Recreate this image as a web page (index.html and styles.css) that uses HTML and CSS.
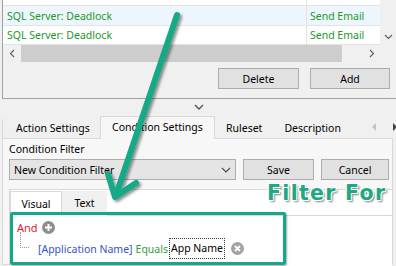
FILE: index.html
```html
<!DOCTYPE html>
<html lang="en">
<head>
    <meta charset="UTF-8">
    <meta name="viewport" content="width=device-width, initial-scale=1.0">
    <title>Action Settings</title>
    <link rel="stylesheet" href="styles.css">
</head>
<body>
    <div class="list-panel">
        <div class="grid">
            <div class="grid-main">
                <div class="row row-cut">
                    <div class="cell cell-name"></div>
                    <div class="cell cell-action"></div>
                </div>
                <div class="row row-hot">
                    <div class="cell cell-name">SQL Server: Deadlock</div>
                    <div class="cell cell-action">Send Email</div>
                </div>
                <div class="row">
                    <div class="cell cell-name">SQL Server: Deadlock</div>
                    <div class="cell cell-action">Send Email</div>
                </div>
                <div class="hscroll">
                    <div class="sb-btn">
                        <svg width="7" height="9" viewBox="0 0 7 9"><polyline points="5,1 1.5,4.5 5,8" fill="none" stroke="#606060" stroke-width="1.2"/></svg>
                    </div>
                    <div class="sb-thumb"></div>
                    <div class="sb-track"></div>
                    <div class="sb-btn">
                        <svg width="7" height="9" viewBox="0 0 7 9"><polyline points="2,1 5.5,4.5 2,8" fill="none" stroke="#606060" stroke-width="1.2"/></svg>
                    </div>
                </div>
            </div>
            <div class="vscroll">
                <div class="vs-track"></div>
                <div class="vs-btn">
                    <svg width="9" height="7" viewBox="0 0 9 7"><polyline points="1,2 4.5,5.5 8,2" fill="none" stroke="#606060" stroke-width="1.2"/></svg>
                </div>
                <div class="vs-corner"></div>
            </div>
        </div>
        <div class="list-buttons">
            <button class="btn btn-delete">Delete</button>
            <button class="btn btn-add">Add</button>
        </div>
    </div>

    <div class="splitter">
        <svg width="10" height="6" viewBox="0 0 10 6"><polyline points="1,1 5,5 9,1" fill="none" stroke="#505050" stroke-width="1.3"/></svg>
    </div>

    <div class="tabs">
        <div class="tab-strip">
            <div class="tab tab-first">Action Settings</div>
            <div class="tab tab-active">Condition Settings</div>
            <div class="tab">Ruleset</div>
            <div class="tab">Description</div>
            <div class="tab-arrows">
                <svg width="5" height="8" viewBox="0 0 5 8"><polygon points="4,0 0,4 4,8" fill="#c4c4c4"/></svg>
                <svg width="5" height="8" viewBox="0 0 5 8"><polygon points="1,0 5,4 1,8" fill="#404040"/></svg>
            </div>
        </div>
        <div class="tab-page">
            <div class="field-label">Condition Filter</div>
            <div class="filter-row">
                <div class="combo">
                    <span>New Condition Filter</span>
                    <svg width="10" height="6" viewBox="0 0 10 6"><polyline points="1,1 5,5 9,1" fill="none" stroke="#505050" stroke-width="1.2"/></svg>
                </div>
                <button class="btn btn-save">Save</button>
                <button class="btn btn-cancel">Cancel</button>
            </div>
            <div class="editor">
                <div class="editor-tabs">
                    <div class="etab etab-active">Visual</div>
                    <div class="etab">Text</div>
                </div>
                <div class="editor-body">
                    <div class="node">
                        <span class="op-group">And</span>
                        <svg class="icon" width="13" height="13" viewBox="0 0 13 13"><circle cx="6.5" cy="6.5" r="6.5" fill="#8e8e8e"/><path d="M6.5 3v7M3 6.5h7" stroke="#fff" stroke-width="2"/></svg>
                    </div>
                    <div class="node node-child">
                        <span class="tree-line"></span>
                        <span class="field">[Application Name]</span>
                        <span class="op">Equals</span>
                        <span class="value">App Name</span>
                        <svg class="icon" width="13" height="13" viewBox="0 0 13 13"><circle cx="6.5" cy="6.5" r="6.5" fill="#a3a3a3"/><path d="M4 4l5 5M9 4l-5 5" stroke="#fff" stroke-width="1.8"/></svg>
                    </div>
                </div>
            </div>
        </div>
    </div>

    <div class="callout-box"></div>
    <div class="callout-text">Filter For</div>
    <svg class="callout-arrow" width="396" height="266" viewBox="0 0 396 266">
        <defs>
            <filter id="shade" x="-20%" y="-20%" width="140%" height="140%">
                <feDropShadow dx="2" dy="2" stdDeviation="1.5" flood-color="#000" flood-opacity="0.45"/>
            </filter>
        </defs>
        <g filter="url(#shade)" stroke="#14a987" stroke-width="6" fill="none" stroke-linecap="round" stroke-linejoin="round">
            <line x1="177" y1="15" x2="116" y2="195"/>
            <polyline points="108,174 115,197 136,183"/>
        </g>
    </svg>
</body>
</html>
```

FILE: styles.css
```css
* {
    margin: 0;
    padding: 0;
    box-sizing: border-box;
}

body {
    position: relative;
    width: 396px;
    height: 266px;
    overflow: hidden;
    background: #f0f0f0;
    font-family: 'Noto Sans', sans-serif;
    font-size: 10.5px;
    color: #000;
}

svg {
    display: block;
}

/* top list */
.list-panel {
    margin-left: 2px;
    border-left: 1px solid #a0a0a0;
    border-bottom: 1px solid #a0a0a0;
}

.grid {
    display: flex;
    height: 62px;
    background: #fff;
}

.grid-main {
    flex: 1;
    display: flex;
    flex-direction: column;
}

.row {
    display: flex;
    height: 19px;
    border-bottom: 1px solid #e3e3e3;
}

.row-cut {
    height: 6px;
}

.row-hot {
    height: 20px;
    background: #eef6fd;
}

.cell {
    display: flex;
    align-items: center;
    padding-left: 4px;
    color: #23962a;
    white-space: nowrap;
    overflow: hidden;
}

.cell-name {
    width: 304px;
    border-right: 1px solid #e3e3e3;
}

.cell-action {
    flex: 1;
    padding-left: 3px;
}

.hscroll {
    display: flex;
    height: 17px;
    background: #f0f0f0;
}

.sb-btn {
    width: 18px;
    display: flex;
    align-items: center;
    justify-content: center;
}

.sb-thumb {
    width: 321px;
    background: #cdcdcd;
}

.sb-track {
    flex: 1;
}

.vscroll {
    width: 16px;
    display: flex;
    flex-direction: column;
    background: #f0f0f0;
}

.vs-track {
    flex: 1;
}

.vs-btn {
    height: 17px;
    display: flex;
    align-items: center;
    justify-content: center;
}

.vs-corner {
    height: 17px;
}

.list-buttons {
    display: flex;
    justify-content: flex-end;
    gap: 11px;
    height: 36px;
    padding: 6px 6px 0 0;
}

.btn {
    height: 21px;
    background: #e1e1e1;
    border: 1px solid #adadad;
    font-family: inherit;
    font-size: inherit;
    color: #000;
}

.btn-delete {
    width: 81px;
}

.btn-add {
    width: 80px;
}

/* splitter */
.splitter {
    height: 17px;
    display: flex;
    justify-content: center;
    padding-top: 5px;
    padding-left: 2px;
}

/* tab control */
.tabs {
    margin-left: 2px;
    margin-right: 3px;
}

.tab-strip {
    display: flex;
    align-items: flex-end;
    height: 22px;
}

.tab {
    height: 19px;
    line-height: 18px;
    padding: 0 11px;
    color: #000;
    white-space: nowrap;
}

.tab-first {
    width: 98px;
    padding-left: 13px;
    border-left: 1px solid #d9d9d9;
}

.tab-active {
    width: 115px;
    height: 23px;
    line-height: 21px;
    margin-bottom: -1px;
    padding-left: 11px;
    background: #f7f7f7;
    border: 1px solid #d9d9d9;
    border-bottom: none;
    position: relative;
}

.tab-arrows {
    flex: 1;
    display: flex;
    justify-content: flex-end;
    gap: 15px;
    padding: 0 0 7px 0;
    margin-right: -4px;
}

.tab-page {
    height: 127px;
    background: #f7f7f7;
    border: 1px solid #d9d9d9;
    padding: 3px 0 0 6px;
}

.field-label {
    height: 17px;
    line-height: 14px;
    color: #000;
}

.filter-row {
    display: flex;
    gap: 7px;
    height: 21px;
}

.combo {
    width: 227px;
    display: flex;
    align-items: center;
    justify-content: space-between;
    padding: 0 4px 0 4px;
    background: #e5e5e5;
    border: 1px solid #adadad;
}

.btn-save {
    width: 71px;
}

.btn-cancel {
    width: 68px;
}

.editor {
    margin-top: 9px;
    height: 80px;
    background: #fff;
    border: 1px solid #d9d9d9;
    border-right: none;
    border-bottom: none;
}

.editor-tabs {
    display: flex;
    height: 26px;
    padding-top: 1px;
    border-bottom: 1px solid #d9d9d9;
}

.etab {
    width: 45px;
    height: 25px;
    line-height: 25px;
    text-align: center;
    background: #f0f0f0;
}

.etab-active {
    width: 52px;
    background: #fff;
    border: 1px solid #d9d9d9;
    border-bottom: none;
    margin-bottom: -1px;
    height: 25px;
}

.editor-body {
    padding: 1px 0 0 7px;
}

.node {
    display: flex;
    align-items: center;
    gap: 4px;
    height: 21px;
}

.op-group {
    color: #e3172f;
    font-size: 11px;
}

.node-child {
    position: relative;
    padding-left: 21px;
}

.tree-line {
    position: absolute;
    left: 3px;
    top: -6px;
    width: 9px;
    height: 16px;
    border-left: 1px dotted #9a9a9a;
    border-bottom: 1px dotted #9a9a9a;
}

.field {
    color: #3653c8;
}

.op {
    color: #3b9a3b;
    margin-left: -1px;
}

.value {
    margin-left: -3px;
    padding: 0 1px;
    height: 21px;
    line-height: 19px;
    border: 1px dotted #333;
}

.node-child .icon {
    margin-left: 2px;
}

/* annotations drawn on top */
.callout-box {
    position: absolute;
    left: 10px;
    top: 212px;
    width: 276px;
    height: 53px;
    border: 3px solid #15a888;
    border-radius: 2px;
    box-shadow: 1px 1px 2px rgba(0, 0, 0, 0.35);
}

.callout-text {
    position: absolute;
    left: 267px;
    top: 181px;
    font-family: 'DejaVu Sans', sans-serif;
    font-weight: bold;
    font-size: 20.5px;
    letter-spacing: 1.3px;
    color: #1fa883;
    text-shadow:
        -1px -1px 0 #fff, 1px -1px 0 #fff, -1px 1px 0 #fff, 1px 1px 0 #fff,
        2px 2px 2px rgba(0, 0, 0, 0.5);
}

.callout-arrow {
    position: absolute;
    left: 0;
    top: 0;
    pointer-events: none;
}
```
